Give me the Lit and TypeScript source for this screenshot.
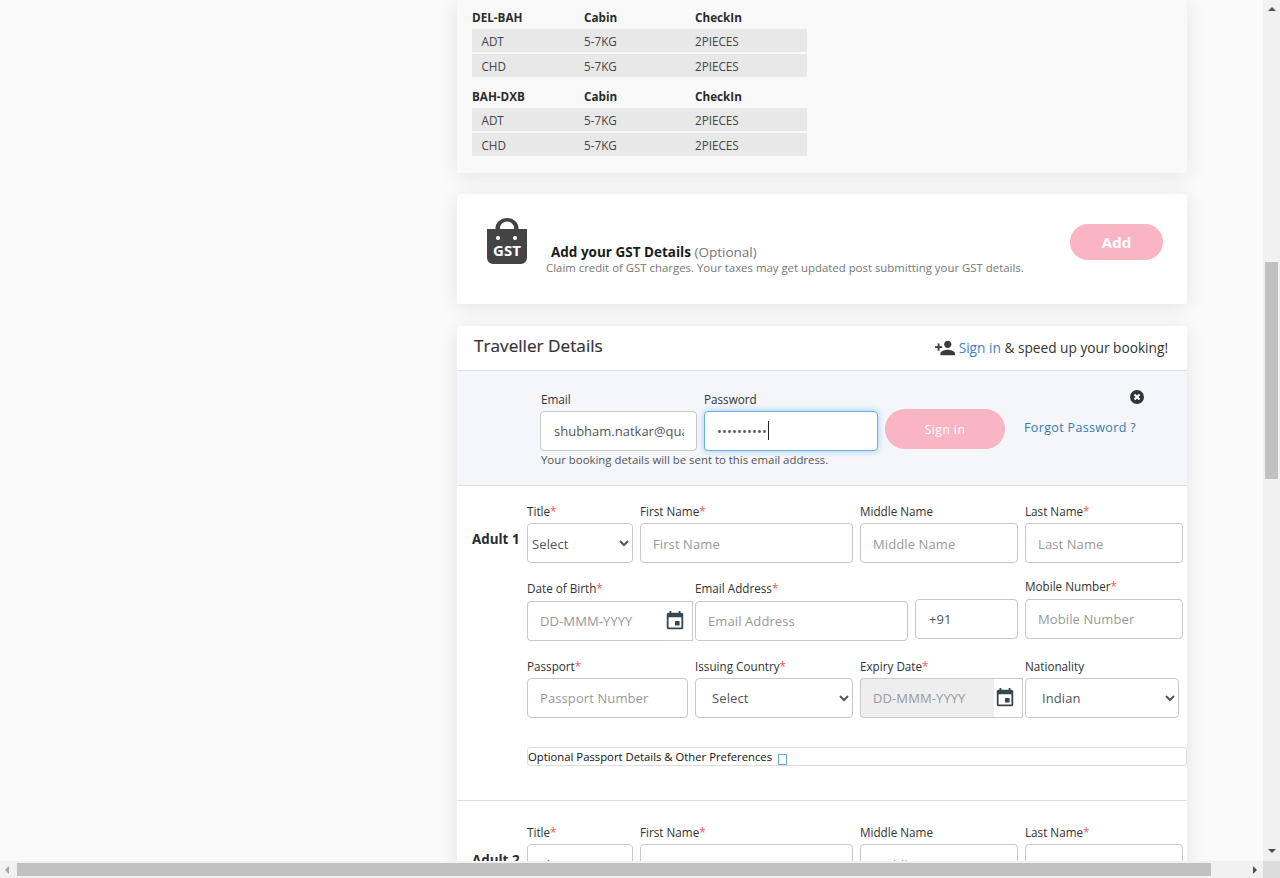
import {LitElement, html, css, svg} from 'lit';
import {customElement} from 'lit/decorators.js';

const calendar = html`<svg class="cal" viewBox="0 0 24 24" width="22" height="22"><path d="M17 12h-5v5h5v-5zM16 1v2H8V1H6v2H5c-1.11 0-1.99.9-1.99 2L3 19c0 1.1.89 2 2 2h14c1.1 0 2-.9 2-2V5c0-1.1-.9-2-2-2h-1V1h-2zm3 18H5V8h14v11z"/></svg>`;

const routes = ['DEL-BAH', 'BAH-DXB'];
const pax = ['ADT', 'CHD'];

@customElement('app-root')
export class AppRoot extends LitElement {
  static styles = css`
    :host {
      display: grid;
      grid-template-columns: minmax(0, 1fr) 17px;
      grid-template-rows: minmax(0, 1fr) 17px;
      height: 878px;
      overflow: hidden;
      background: #fafafa;
      color: #212529;
      font-family: 'Open Sans', 'Noto Sans', sans-serif;
      font-size: 11.7px;
    }
    * {
      box-sizing: border-box;
    }
    .page {
      overflow: hidden;
      padding-left: 457px;
    }
    .card {
      width: 730px;
      background: #fff;
      border-radius: 3px;
      box-shadow: 0 3px 20px rgba(0, 0, 0, 0.09);
    }
    .baggage {
      height: 173px;
      background: #f9f9f9;
      padding: 0 15px;
      border-radius: 0;
    }
    .route-head,
    .route-row {
      display: grid;
      grid-template-columns: 112px 111px 1fr;
      width: 335px;
      align-items: center;
    }
    .route-head {
      height: 29px;
      padding-top: 4px;
      font-weight: 700;
      color: #2b2b2b;
    }
    .group + .group {
      margin-top: 2px;
    }
    .route-row {
      height: 23px;
      padding-top: 1px;
      background: #e8e8e8;
      margin-bottom: 2px;
      color: #444;
    }
    .route-row span:first-child {
      padding-left: 9.5px;
    }
    .gst {
      display: flex;
      height: 110px;
      margin-top: 21px;
      padding: 24px 24px 0 30px;
    }
    .gst-icon {
      flex: none;
      width: 40px;
      height: 46px;
    }
    .gst-icon text {
      font-family: 'Open Sans', sans-serif;
      font-weight: 700;
      font-size: 15px;
      fill: #fff;
    }
    .gst-text {
      flex: 1;
      padding: 25px 0 0 19px;
    }
    .gst-title {
      padding-left: 5px;
      font-size: 13.5px;
      line-height: 18px;
      font-weight: 700;
      color: #1c1c1c;
    }
    .gst-title span {
      font-weight: 400;
      color: #777;
    }
    .gst-sub {
      font-size: 11.4px;
      line-height: 14px;
      color: #777;
    }
    .pill {
      border: 0;
      border-radius: 20px;
      background: #f9b5c4;
      color: #fff;
      font-family: inherit;
    }
    .add {
      flex: none;
      width: 93px;
      height: 36px;
      margin-top: 6px;
      font-size: 15px;
      font-weight: 700;
    }
    .traveller {
      margin-top: 22px;
    }
    .t-head {
      display: flex;
      align-items: center;
      justify-content: space-between;
      height: 45px;
      padding: 0 19px 0 17px;
      border-bottom: 1px solid #e0e0e4;
    }
    .t-head h2 {
      margin: -5px 0 0;
      font-size: 17.2px;
      font-weight: 500;
      -webkit-text-stroke: 0.2px #333;
      color: #333;
    }
    .speed {
      display: flex;
      align-items: center;
      gap: 3px;
      padding-bottom: 1px;
      font-size: 13.7px;
      color: #333;
    }
    .speed svg {
      fill: #3c3c3c;
    }
    .link {
      color: #3f7fd6;
    }
    .signin {
      position: relative;
      height: 115px;
      padding: 20px 0 0 83px;
      background: #f4f6fa;
      border-bottom: 1px solid #ddd;
    }
    .signin-row {
      display: flex;
      gap: 7px;
    }
    label {
      display: block;
      height: 20px;
      line-height: 16px;
      white-space: nowrap;
      color: #333;
    }
    label i {
      font-style: normal;
      color: #f55;
    }
    input,
    select {
      display: block;
      width: 100%;
      height: 40px;
      border: 1px solid #c8c8c8;
      border-radius: 4px;
      background: #fff;
      padding: 0 12px;
      font-family: inherit;
      font-size: 13px;
      letter-spacing: 0.1px;
      color: #555;
      outline: none;
    }
    input::placeholder {
      color: #999;
    }
    .pw {
      position: relative;
      width: 174px;
    }
    .pw input {
      border-color: #66afe9;
      box-shadow: 0 0 6px rgba(102, 175, 233, 0.6);
    }
    .caret {
      position: absolute;
      left: 64px;
      top: 30px;
      width: 1px;
      height: 19px;
      background: #222;
    }
    .em {
      width: 157px;
    }
    .em label {
      padding-left: 1px;
    }
    .em input {
      padding-left: 13px;
      letter-spacing: 0;
    }
    .sign-btn {
      width: 120px;
      height: 40px;
      margin-top: 18px;
      font-size: 12px;
      letter-spacing: 0.5px;
    }
    .forgot {
      margin: 28px 0 0 12px;
      font-size: 12.5px;
      letter-spacing: 0.35px;
      color: #337ab7;
    }
    .help {
      margin-top: 2px;
      padding-left: 1px;
      font-size: 11.4px;
      line-height: 14px;
      color: #555;
    }
    .close {
      position: absolute;
      left: 672.5px;
      top: 19px;
    }
    .adult {
      display: flex;
      padding: 17px 0 0 15px;
      height: 315px;
      border-bottom: 1px solid #e0e0e8;
    }
    .adult + .adult {
      padding-top: 23px;
      border-bottom: 0;
    }
    .adult-name {
      flex: none;
      width: 55px;
      padding-top: 27px;
      font-size: 13.4px;
      line-height: 18px;
      font-weight: 700;
      color: #2b2b2b;
    }
    .fields {
      flex: none;
      width: 660px;
    }
    .row {
      display: grid;
      gap: 7px;
    }
    .row-a {
      grid-template-columns: 106px 213px 158px 158px;
    }
    .row-a input,
    .row-a select {
      padding-top: 2px;
    }
    .row-b,
    .row-c {
      grid-template-columns: 161px 158px 158px 158px;
    }
    .row-b {
      margin-top: 16px;
    }
    .row-b label {
      line-height: 14px;
    }
    .row-c {
      margin-top: 17px;
    }
    .row-a select {
      padding-left: 0;
    }
    .group-date {
      display: flex;
      height: 40px;
    }
    .group-date input {
      flex: none;
      width: 137px;
      border-radius: 4px 0 0 4px;
      border-right: 0;
    }
    .dob {
      width: 166px;
    }
    .expiry input {
      flex: none;
      width: 134px;
      background: #eee;
    }
    .expiry {
      width: 163px;
    }
    .addon {
      display: flex;
      flex: none;
      width: 29px;
      padding-right: 7px;
      align-items: center;
      justify-content: center;
      background: #fff;
      border: 1px solid #ccc;
      border-left: 0;
    }
    .cal {
      flex: none;
      fill: #37474f;
    }
    .contact {
      display: flex;
      gap: 7px;
      grid-column: span 2;
    }
    .shift {
      padding-top: 2px;
    }
    .mail {
      width: 213px;
    }
    .code {
      width: 103px;
      margin-top: 20px;
      padding-left: 13px;
    }
    .nat {
      width: 154px;
    }
    .optional {
      display: flex;
      align-items: center;
      height: 19px;
      margin-top: 29px;
      border: 1px solid #ddd;
      border-radius: 3px;
      font-size: 11.3px;
      color: #111;
    }
    .optional b {
      width: 9px;
      height: 11px;
      margin: 5px 0 0 6px;
      border: 1px solid #6aa8e8;
    }
    .v-bar,
    .h-bar {
      position: relative;
      background: #f1f1f1;
    }
    .v-bar .thumb {
      position: absolute;
      left: 2px;
      top: 262px;
      width: 13px;
      height: 217px;
      background: #c1c1c1;
    }
    .h-bar .thumb {
      position: absolute;
      left: 17px;
      top: 2px;
      width: 1194px;
      height: 13px;
      background: #c1c1c1;
    }
    .corner {
      background: #dcdcdc;
    }
    .arrow {
      position: absolute;
      width: 0;
      height: 0;
      border: 4px solid transparent;
    }
    .up {
      left: 5px;
      top: 7px;
      border-top: 0;
      border-bottom-color: #505050;
    }
    .down {
      left: 5px;
      bottom: 8px;
      border-bottom: 0;
      border-top-color: #505050;
    }
    .left {
      left: 5px;
      top: 5px;
      border-left: 0;
      border-right-color: #a3a3a3;
    }
    .right {
      left: 1253px;
      top: 5px;
      border-right: 0;
      border-left-color: #505050;
    }
  `;

  private field(name: string, required: boolean, control: unknown) {
    return html`<div>
      <label>${name}${required ? html`<i>*</i>` : ''}</label>
      ${control}
    </div>`;
  }

  private input(placeholder: string) {
    return html`<input placeholder=${placeholder} />`;
  }

  private adult(n: number) {
    return html`<section class="adult">
      <div class="adult-name">Adult ${n}</div>
      <div class="fields">
        <div class="row row-a">
          ${this.field('Title', true, html`<select><option>Select</option></select>`)}
          ${this.field('First Name', true, this.input('First Name'))}
          ${this.field('Middle Name', false, this.input('Middle Name'))}
          ${this.field('Last Name', true, this.input('Last Name'))}
        </div>
        <div class="row row-b">
          <div class="shift">
            ${this.field('Date of Birth', true, html`<div class="group-date dob">
              ${this.input('DD-MMM-YYYY')}<span class="addon">${calendar}</span>
            </div>`)}
          </div>
          <div class="contact">
            <div class="mail shift">${this.field('Email Address', true, this.input('Email Address'))}</div>
            <input class="code" value="+91" />
          </div>
          ${this.field('Mobile Number', true, this.input('Mobile Number'))}
        </div>
        <div class="row row-c">
          ${this.field('Passport', true, this.input('Passport Number'))}
          ${this.field('Issuing Country', true, html`<select><option>Select</option></select>`)}
          ${this.field('Expiry Date', true, html`<div class="group-date expiry">
            <input placeholder="DD-MMM-YYYY" disabled /><span class="addon">${calendar}</span>
          </div>`)}
          ${this.field('Nationality', false, html`<select class="nat"><option>Indian</option></select>`)}
        </div>
        <div class="optional">Optional Passport Details &amp; Other Preferences <b></b></div>
      </div>
    </section>`;
  }

  render() {
    return html`
      <div class="page">
        <div class="card baggage">
          ${routes.map(
            (route) => html`<div class="group">
              <div class="route-head">
                <span>${route}</span><span>Cabin</span><span>CheckIn</span>
              </div>
              ${pax.map(
                (p) => html`<div class="route-row">
                  <span>${p}</span><span>5-7KG</span><span>2PIECES</span>
                </div>`
              )}
            </div>`
          )}
        </div>

        <div class="card gst">
          <svg class="gst-icon" viewBox="0 0 40 46">
            ${svg`<path fill="#444" fill-rule="evenodd" d="M8.500 11V10a11.500 10 0 0 1 23 0v1H40v29a6 6 0 0 1-6 6H6a6 6 0 0 1-6-6V11zM13 11h14v-1a7 6.500 0 0 0-14 0z"/>
            <circle cx="11" cy="20" r="2" fill="#fff"/><circle cx="28" cy="20" r="2" fill="#fff"/>
            <text x="20" y="37.500" text-anchor="middle">GST</text>`}
          </svg>
          <div class="gst-text">
            <div class="gst-title">Add your GST Details <span>(Optional)</span></div>
            <div class="gst-sub">Claim credit of GST charges. Your taxes may get updated post submitting your GST details.</div>
          </div>
          <button class="pill add">Add</button>
        </div>

        <div class="card traveller">
          <div class="t-head">
            <h2>Traveller Details</h2>
            <div class="speed">
              <svg viewBox="0 0 24 24" width="22" height="22"><path d="M15 12c2.210 0 4-1.790 4-4s-1.790-4-4-4-4 1.790-4 4 1.790 4 4 4zm-9-2V7H4v3H1v2h3v3h2v-3h3v-2H6zm9 4c-2.670 0-8 1.340-8 4v2h16v-2c0-2.660-5.330-4-8-4z"/></svg>
              <span><span class="link">Sign in</span> &amp; speed up your booking!</span>
            </div>
          </div>
          <div class="signin">
            <div class="signin-row">
              <div class="em">${this.field('Email', false, html`<input value="shubham.natkar@quadlabs.com" />`)}</div>
              <div class="pw">
                ${this.field('Password', false, html`<input type="password" value="password12" />`)}
                <span class="caret"></span>
              </div>
              <button class="pill sign-btn">Sign in</button>
              <div class="forgot">Forgot Password ?</div>
            </div>
            <div class="help">Your booking details will be sent to this email address.</div>
            <svg class="close" viewBox="0 0 14 14" width="14" height="14">
              <circle cx="7" cy="7" r="7" fill="#333"/>
              <path d="M4.500 4.500l5 5M9.500 4.500l-5 5" stroke="#fff" stroke-width="2.200"/>
            </svg>
          </div>
          ${this.adult(1)} ${this.adult(2)}
        </div>
      </div>
      <div class="v-bar">
        <span class="arrow up"></span><span class="thumb"></span><span class="arrow down"></span>
      </div>
      <div class="h-bar">
        <span class="arrow left"></span><span class="thumb"></span><span class="arrow right"></span>
      </div>
      <div class="corner"></div>
    `;
  }
}
